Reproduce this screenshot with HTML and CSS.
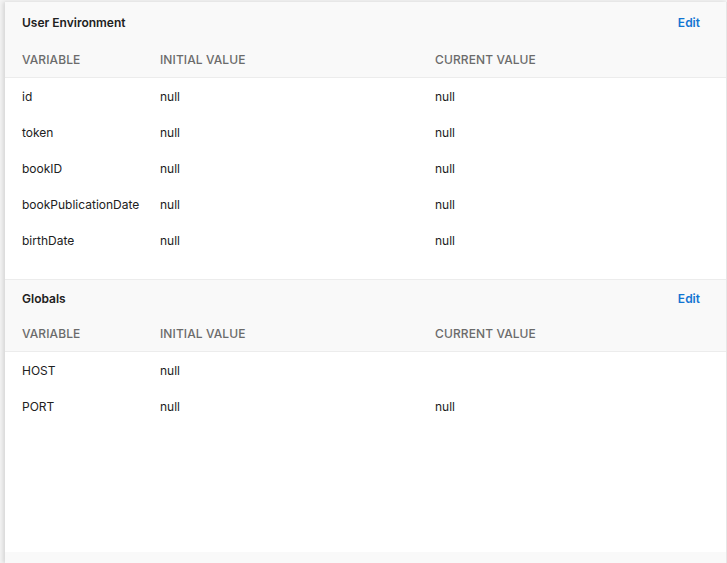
FILE: index.html
```html
<!DOCTYPE html>
<html>
<head>
<meta charset="utf-8">
<link rel="stylesheet" href="styles.css">
</head>
<body>
<div class="backdrop">
  <div class="panel">
    <section class="section first">
      <div class="title-row">
        <span class="title">User Environment</span>
        <a class="edit">Edit</a>
      </div>
      <div class="row head">
        <span>VARIABLE</span><span>INITIAL VALUE</span><span>CURRENT VALUE</span>
      </div>
      <div class="body">
        <div class="row"><span>id</span><span>null</span><span>null</span></div>
        <div class="row"><span>token</span><span>null</span><span>null</span></div>
        <div class="row"><span>bookID</span><span>null</span><span>null</span></div>
        <div class="row"><span>bookPublicationDate</span><span>null</span><span>null</span></div>
        <div class="row"><span>birthDate</span><span>null</span><span>null</span></div>
      </div>
    </section>
    <section class="section second">
      <div class="title-row">
        <span class="title">Globals</span>
        <a class="edit">Edit</a>
      </div>
      <div class="row head">
        <span>VARIABLE</span><span>INITIAL VALUE</span><span>CURRENT VALUE</span>
      </div>
      <div class="body">
        <div class="row"><span>HOST</span><span>null</span><span></span></div>
        <div class="row"><span>PORT</span><span>null</span><span>null</span></div>
      </div>
    </section>
    <div class="spacer"></div>
    <div class="footer"></div>
  </div>
</div>
</body>
</html>
```
FILE: styles.css
```css
html, body {
  margin: 0;
  padding: 0;
  height: 100%;
}
body {
  background: #f3f3f3;
  font-family: Inter, "Noto Sans", sans-serif;
  font-size: 12px;
  color: #212121;
}
.backdrop {
  height: 563px;
  padding-left: 5px;
  padding-top: 2px;
  box-sizing: border-box;
}
.panel {
  height: 561px;
  background: #fff;
  border-right: 1px solid #e6e6e6;
  box-shadow: -2px 0 4px rgba(0, 0, 0, 0.12);
  display: flex;
  flex-direction: column;
}
.section {
  display: flex;
  flex-direction: column;
}
.section.second {
  border-top: 1px solid #ececec;
}
.title-row {
  display: flex;
  align-items: center;
  justify-content: space-between;
  background: #f9f9f9;
  padding: 0 26px 0 17px;
}
.first .title-row {
  height: 40px;
  padding-top: 1px;
  box-sizing: border-box;
}
.second .title-row {
  height: 36px;
}
.title {
  font-weight: 600;
  color: #212121;
}
.edit {
  color: #1175d2;
  font-weight: 600;
  font-size: 12px;
  cursor: pointer;
}
.row {
  display: grid;
  grid-template-columns: 138px 275px 1fr;
  align-items: center;
  height: 36px;
  padding-left: 17px;
}
.row.head {
  background: #f9f9f9;
  color: #6b6b6b;
  font-weight: 500;
  border-bottom: 1px solid #ececec;
  height: 35px;
  letter-spacing: 0.1px;
}
.first .body {
  padding-bottom: 21px;
}
.spacer {
  flex: 1;
}
.footer {
  height: 11px;
  background: #f9f9f9;
}
```
